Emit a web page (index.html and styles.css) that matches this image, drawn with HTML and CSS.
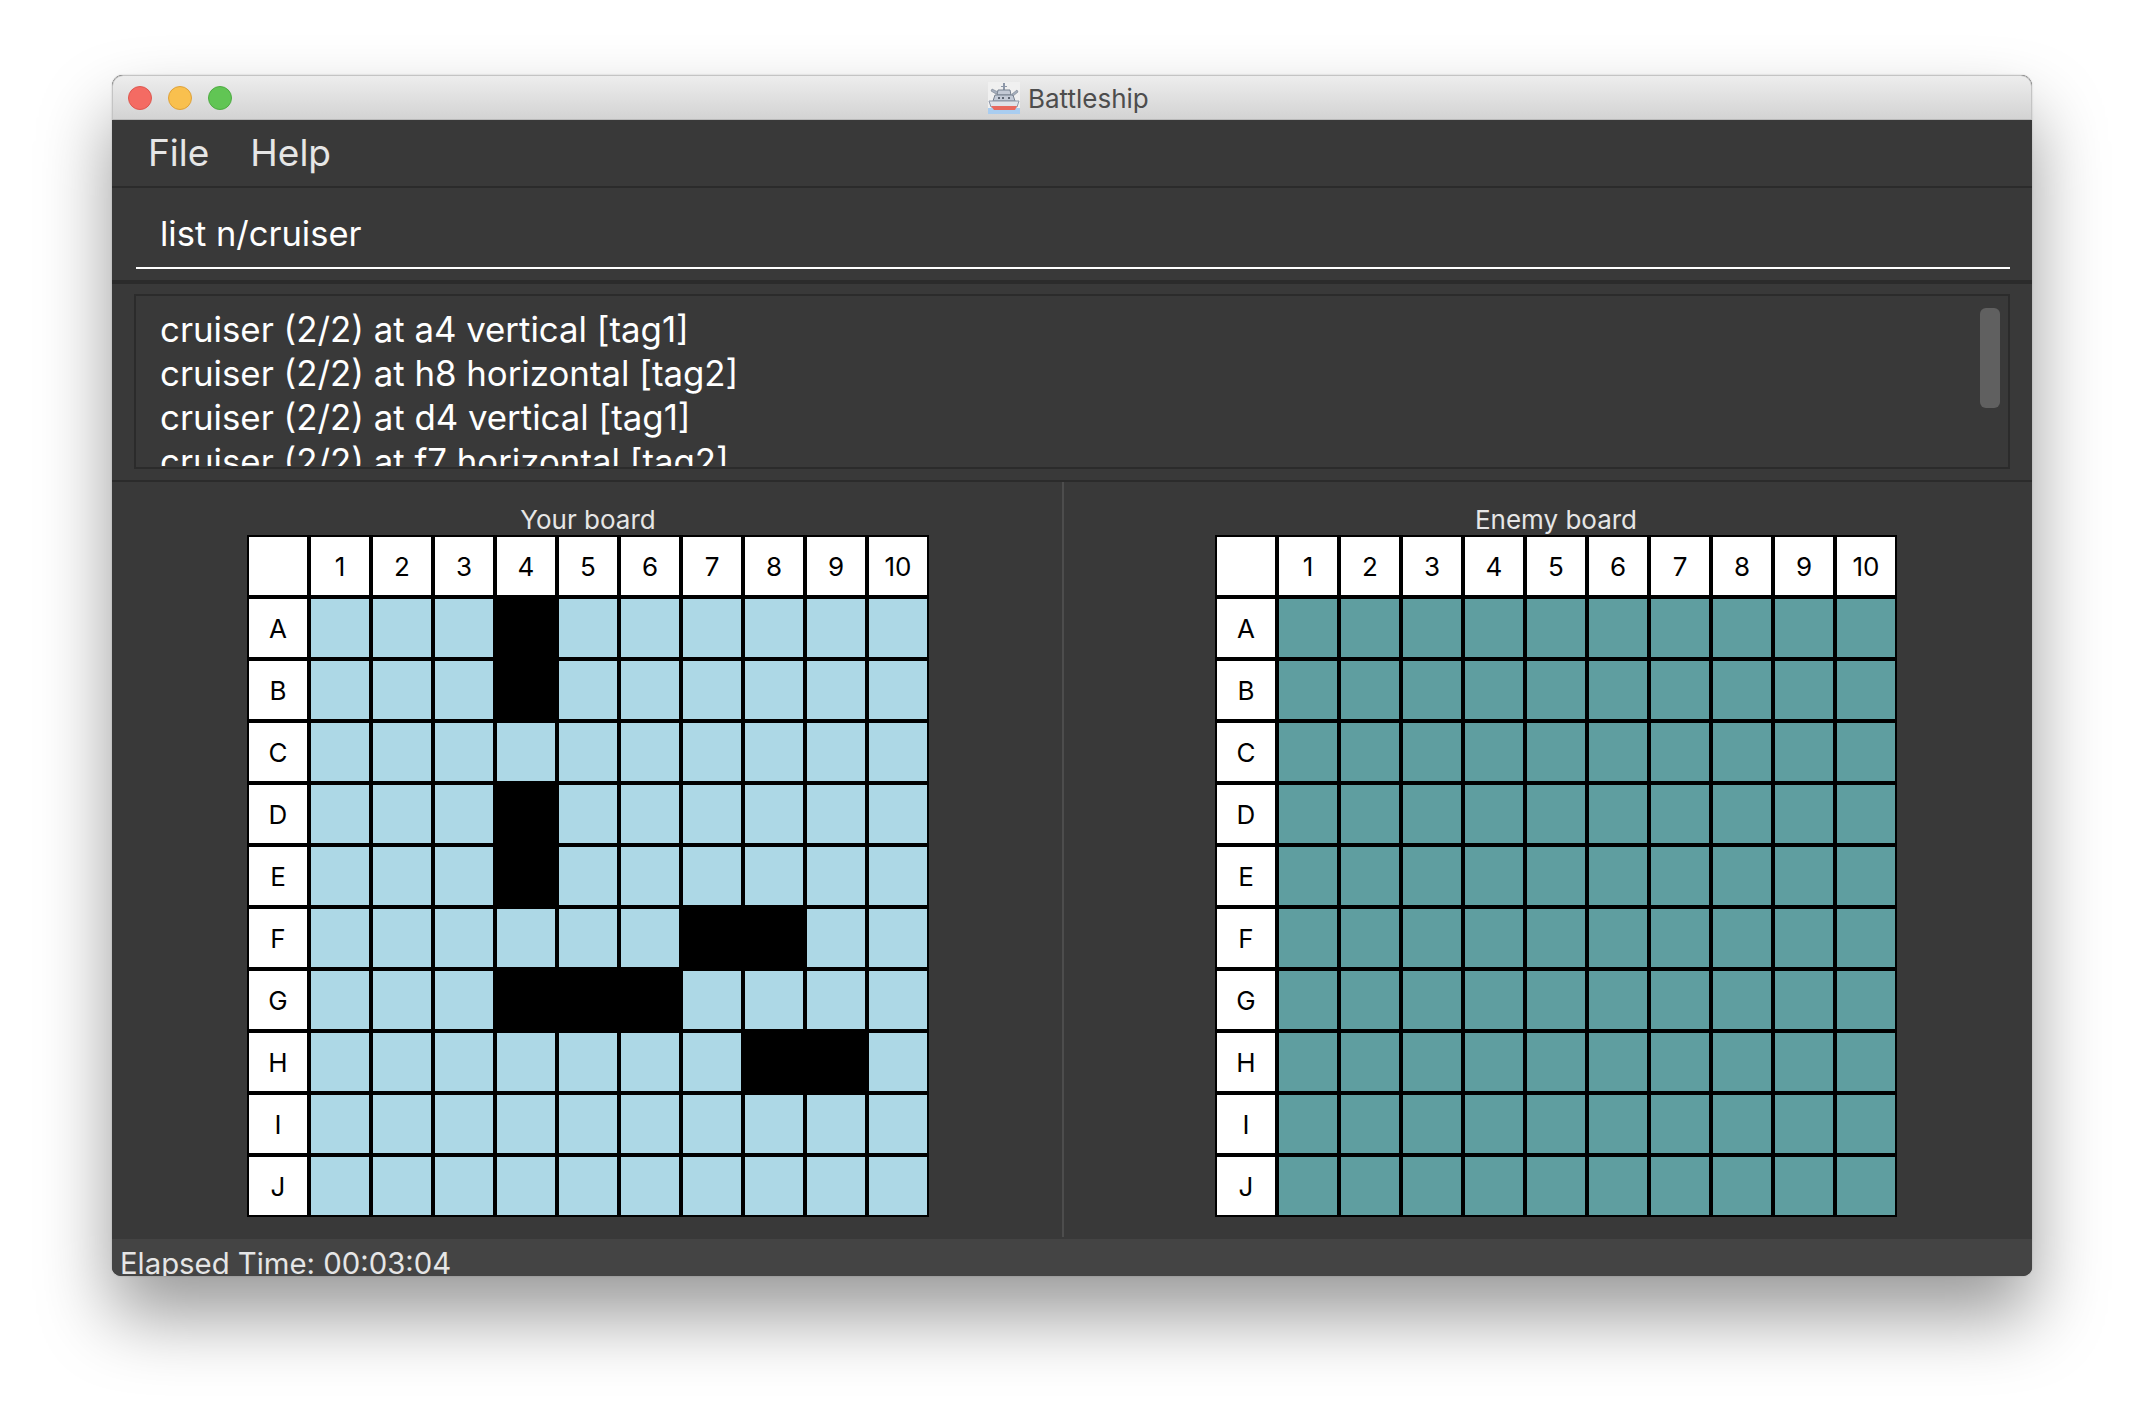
FILE: index.html
```html
<!DOCTYPE html>
<html lang="en">
  <head>
    <meta charset="UTF-8" />
    <meta name="viewport" content="width=device-width, initial-scale=1.0" />
    <title>Battleship</title>
    <link rel="stylesheet" href="styles.css">
  </head>
  <body>
    <div class="window">
      <div class="titlebar">
        <div class="lights">
          <span class="light red"></span>
          <span class="light yellow"></span>
          <span class="light green"></span>
        </div>
        <div class="title">
          <svg class="ship" viewBox="0 0 32 32" width="32" height="32">
            <rect width="32" height="32" fill="#f0f0f0"/>
            <rect x="0" y="26" width="32" height="6" fill="#a9cdf0"/>
            <path d="M15 1h2v3h2v1h-2v3h-2V5h-2V4h2z" fill="#8d97a8"/>
            <path d="M10 8h12l1 5H9z" fill="#c3cad6" stroke="#77818f"/>
            <path d="M7 13h18l2 6H5z" fill="#c3cad6" stroke="#77818f"/>
            <path d="M8 12 3 9l1-2 6 3zM24 12l5-4 1 2-5 4z" fill="#a6afbd" stroke="#77818f" stroke-width=".6"/>
            <path d="M1 19h30l-2 6H3z" fill="#dfe3ea" stroke="#8d97a8"/>
            <path d="M3 24h26l-2 4H6z" fill="#e8695f"/>
            <path d="M10 15h2v2h-2zM14 15h2v2h-2zM20 15h2v2h-2z" fill="#5d6673"/>
          </svg>
          <span>Battleship</span>
        </div>
      </div>

      <div class="menubar">
        <span>File</span>
        <span>Help</span>
      </div>

      <div class="command-box">
        <div class="command-input">list n/cruiser</div>
      </div>

      <div class="result-box">
        <div class="result-list">
          <div class="result-text">
            <div>cruiser (2/2) at a4 vertical [tag1]</div>
            <div>cruiser (2/2) at h8 horizontal [tag2]</div>
            <div>cruiser (2/2) at d4 vertical [tag1]</div>
            <div>cruiser (2/2) at f7 horizontal [tag2]</div>
          </div>
          <div class="scroll-thumb"></div>
        </div>
      </div>

      <div class="boards">
        <div class="board-pane">
          <div class="board-title">Your board</div>
          <div class="board" id="yourBoard"></div>
        </div>
        <div class="board-pane">
          <div class="board-title">Enemy board</div>
          <div class="board enemy" id="enemyBoard"></div>
        </div>
      </div>

      <div class="statusbar">Elapsed Time: 00:03:04</div>
    </div>

    <script src="board.js"></script>
  </body>
</html>
```

FILE: styles.css
```css
body {
  margin: 0;
  width: 2144px;
  height: 1424px;
  background-color: #ffffff;
  font-family: Inter, "Noto Sans", sans-serif;
  padding: 75px 112px 0;
  box-sizing: border-box;
  overflow: hidden;
}

.window {
  width: 1920px;
  height: 1201px;
  display: flex;
  flex-direction: column;
  overflow: hidden;
  border-radius: 11px 11px 9px 9px;
  background-color: #393939;
  box-shadow: 0 40px 72px rgba(0, 0, 0, 0.4), 0 0 2px rgba(0, 0, 0, 0.2);
}

.titlebar {
  height: 45px;
  flex: none;
  display: flex;
  align-items: center;
  position: relative;
  box-sizing: border-box;
  background: linear-gradient(#ededed, #d3d3d3);
  border: 1px solid #c4c4c4;
  border-bottom-color: #b9b9b9;
  border-radius: 11px 11px 0 0;
}

.lights {
  display: flex;
  gap: 16px;
  padding-left: 15px;
}

.light {
  width: 24px;
  height: 24px;
  border-radius: 50%;
  box-sizing: border-box;
  border: 1px solid;
}

.red {
  background-color: #f46b63;
  border-color: #dd5850;
}

.yellow {
  background-color: #f9c04e;
  border-color: #dea13a;
}

.green {
  background-color: #61c554;
  border-color: #4fab43;
}

.title {
  position: absolute;
  left: 875px;
  top: 6px;
  display: flex;
  align-items: center;
  gap: 8px;
  color: #4d4d4d;
  font-size: 26px;
}

.menubar {
  height: 68px;
  flex: none;
  display: flex;
  align-items: center;
  gap: 41px;
  padding: 0 0 2px 36px;
  box-sizing: border-box;
  color: #e6e6e6;
  font-size: 37px;
  border-bottom: 2px solid #2b2b2b;
}

.command-box {
  height: 96px;
  flex: none;
  box-sizing: border-box;
  padding: 0 22px 0 24px;
  border-bottom: 4px solid #2b2b2b;
}

.command-input {
  height: 81px;
  box-sizing: border-box;
  padding: 24px 0 0 24px;
  color: #ffffff;
  font-size: 34.5px;
  line-height: 44px;
  border-bottom: 2px solid #ffffff;
}

.result-box {
  height: 198px;
  flex: none;
  box-sizing: border-box;
  padding: 10px 22px 0 22px;
  border-bottom: 2px solid #2b2b2b;
}

.result-list {
  height: 175px;
  position: relative;
  overflow: hidden;
  box-sizing: border-box;
  padding: 11px 0 0 24px;
  border: 2px solid #2b2b2b;
  color: #ffffff;
  font-size: 34.8px;
  line-height: 44px;
}

.result-text {
  height: 159px;
  overflow: hidden;
}

.scroll-thumb {
  position: absolute;
  right: 8px;
  top: 12px;
  width: 20px;
  height: 100px;
  border-radius: 6px;
  background-color: #606060;
}

.boards {
  flex: 1;
  display: flex;
  min-height: 0;
}

.board-pane {
  flex: 1;
  padding: 22px 0 0 16px;
  display: flex;
  flex-direction: column;
  align-items: center;
  height: 755px;
  box-sizing: border-box;
}

.board-pane:first-child {
  flex: none;
  width: 952px;
  padding-left: 2px;
  border-right: 2px solid #4d4d4d;
}

.board-title {
  color: #e6e6e6;
  font-size: 26px;
  line-height: 32px;
  height: 32px;
  margin-bottom: -1px;
}

.board {
  display: grid;
  grid-template-columns: repeat(11, 58px);
  grid-auto-rows: 58px;
  gap: 4px;
  padding: 2px;
  background-color: #000000;
}

.cell {
  display: flex;
  align-items: center;
  justify-content: center;
  background-color: #add8e6;
  color: #000000;
  font-size: 26px;
}

.enemy .cell {
  background-color: #5f9ea0;
}

.board .head {
  background-color: #ffffff;
}

.board .ship-cell {
  background-color: #000000;
}

.statusbar {
  height: 37px;
  flex: none;
  overflow: hidden;
  padding-left: 8px;
  background-color: #444444;
  color: #e6e6e6;
  font-size: 29.3px;
  line-height: 50px;
}
```

FILE: board.js
```js
var letters = "ABCDEFGHIJ";
var ships = ["A4", "B4", "D4", "E4", "F7", "F8", "G4", "G5", "G6", "H8", "H9"];

function buildBoard(id, showShips) {
  var board = document.getElementById(id);
  var html = '<div class="cell head"></div>';
  for (var c = 1; c <= 10; c++) {
    html += '<div class="cell head">' + c + "</div>";
  }
  for (var r = 0; r < 10; r++) {
    html += '<div class="cell head">' + letters[r] + "</div>";
    for (var n = 1; n <= 10; n++) {
      var isShip = showShips && ships.indexOf(letters[r] + n) !== -1;
      html += '<div class="cell' + (isShip ? " ship-cell" : "") + '"></div>';
    }
  }
  board.innerHTML = html;
}

buildBoard("yourBoard", true);
buildBoard("enemyBoard", false);
```
